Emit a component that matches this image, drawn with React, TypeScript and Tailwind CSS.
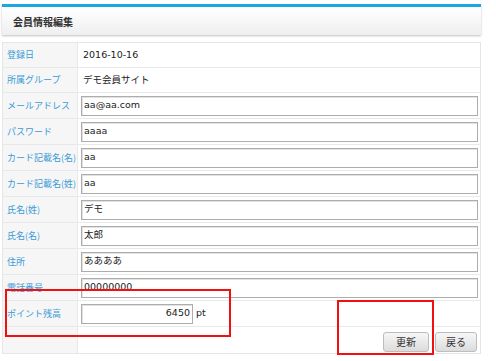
const font = { fontFamily: '"DejaVu Sans", "Noto Sans CJK JP", sans-serif' }
const cjk = { fontFamily: '"Noto Sans CJK JP", "DejaVu Sans", sans-serif' }

const rows: { label: string; value: string; input?: boolean }[] = [
  { label: '登録日', value: '2016-10-16' },
  { label: '所属グループ', value: 'デモ会員サイト' },
  { label: 'メールアドレス', value: 'aa@aa.com', input: true },
  { label: 'パスワード', value: 'aaaa', input: true },
  { label: 'カード記載名(名)', value: 'aa', input: true },
  { label: 'カード記載名(姓)', value: 'aa', input: true },
  { label: '氏名(姓)', value: 'デモ', input: true },
  { label: '氏名(名)', value: '太郎', input: true },
  { label: '住所', value: 'ああああ', input: true },
  { label: '電話番号', value: '00000000', input: true },
]

function Field({ value, className }: { value: string; className?: string }) {
  return (
    <div
      className={`h-[20px] border border-[#adadad] bg-white px-[2px] flex items-center text-[9.5px] text-[#222] shadow-[inset_1px_1px_0_#e2e2e2] ${className ?? ''}`}
    >
      {value}
    </div>
  )
}

function Label({ children }: { children?: React.ReactNode }) {
  return (
    <div
      className="w-[75px] shrink-0 bg-[#f6f6f6] border-r border-[#e9e9e9] flex items-center pl-[4px] text-[9px] text-[#3b9bd6] whitespace-nowrap"
      style={cjk}
    >
      {children}
    </div>
  )
}

export default function App() {
  return (
    <div className="relative w-[496px] h-[361px] bg-white overflow-hidden" style={font}>
      <div className="ml-[2px] mt-[4px] w-[479px]">
        <div className="h-[31px] border-t-[3px] border-[#1ea5e3] bg-gradient-to-b from-white to-[#efefef] shadow-[0_1px_2px_rgba(0,0,0,0.25)] flex items-center pl-[11px]">
          <span className="text-[10px] font-bold text-[#333]" style={cjk}>
            会員情報編集
          </span>
        </div>

        <div className="mt-[7px] border border-[#e6e6e6]">
          {rows.map((r, i) => (
            <div
              key={r.label}
              className={`flex ${i < 2 ? 'h-[25px]' : 'h-[26px]'} border-b border-[#e9e9e9]`}
            >
              <Label>{r.label}</Label>
              <div className="flex-1 flex items-center pl-[3px] pr-[2px]">
                {r.input ? (
                  <Field value={r.value} className="w-full" />
                ) : (
                  <span className="pl-[2px] text-[9.5px] text-[#222]">{r.value}</span>
                )}
              </div>
            </div>
          ))}

          <div className="flex h-[26px] border-b border-[#e9e9e9]">
            <Label>ポイント残高</Label>
            <div className="flex-1 flex items-center pl-[3px]">
              <Field value="6450" className="w-[112px] justify-end" />
              <span className="ml-[3px] text-[9.5px] text-[#222]">pt</span>
            </div>
          </div>

          <div className="flex h-[26px]">
            <Label />
            <div className="flex-1 flex items-center justify-end gap-[6px] pr-[3px] pt-[3px]" style={cjk}>
              <button className="w-[46px] h-[20px] rounded-[3px] border border-[#bdbdbd] bg-gradient-to-b from-[#f7f7f7] to-[#dcdcdc] text-[10px] text-[#333]">
                更新
              </button>
              <button className="w-[42px] h-[20px] rounded-[3px] border border-[#bdbdbd] bg-gradient-to-b from-[#f7f7f7] to-[#dcdcdc] text-[10px] text-[#333]">
                戻る
              </button>
            </div>
          </div>
        </div>
      </div>

      <div className="absolute left-[5px] top-[289px] w-[226px] h-[48px] border-2 border-[#f01010]" />
      <div className="absolute left-[337px] top-[300px] w-[97px] h-[55px] border-2 border-[#f01010]" />
    </div>
  )
}
